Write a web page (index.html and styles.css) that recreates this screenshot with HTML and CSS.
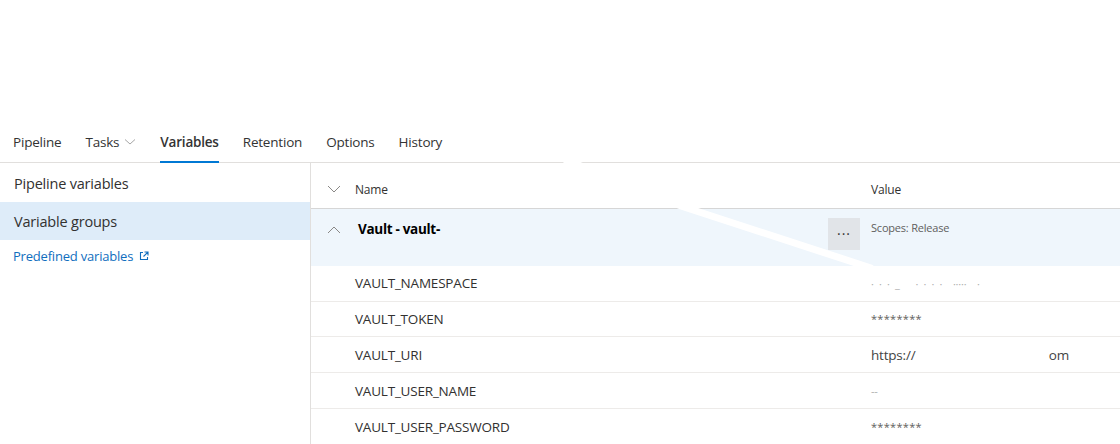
FILE: index.html
```html
<!DOCTYPE html>
<html>
<head>
<meta charset="utf-8">
<link rel="stylesheet" href="styles.css">
</head>
<body>
<div class="page">
  <div class="topspace"></div>
  <nav class="tabs">
    <div class="tab">Pipeline</div>
    <div class="tab">Tasks <svg class="chev" width="12" height="8" viewBox="0 0 12 8"><path d="M1 1.5 L6 6 L11 1.5" fill="none" stroke="#a6a6a6" stroke-width="1"/></svg></div>
    <div class="tab active">Variables</div>
    <div class="tab">Retention</div>
    <div class="tab">Options</div>
    <div class="tab">History</div>
  </nav>
  <div class="main">
    <aside class="side">
      <div class="side-item">Pipeline variables</div>
      <div class="side-item selected">Variable groups</div>
      <a class="side-link">Predefined variables <svg width="10" height="10" viewBox="0 0 10 10"><path d="M4 1.5 H1.5 V8.5 H8.5 V6" fill="none" stroke="#106ebe" stroke-width="1.1"/><path d="M5.5 1 H9 V4.5 M9 1 L4.5 5.5" fill="none" stroke="#106ebe" stroke-width="1.1"/></svg></a>
    </aside>
    <section class="grid">
      <div class="row head">
        <div class="c-icon"><svg width="14" height="8" viewBox="0 0 14 8"><path d="M1 1 L7 7 L13 1" fill="none" stroke="#8a8886" stroke-width="1"/></svg></div>
        <div class="c-name">Name</div>
        <div class="c-value">Value</div>
      </div>
      <div class="row group">
        <div class="c-icon"><svg width="14" height="8" viewBox="0 0 14 8"><path d="M1 7 L7 1 L13 7" fill="none" stroke="#8a8886" stroke-width="1"/></svg></div>
        <div class="c-name group-name"><span class="title">Vault - vault-</span><span class="more">···</span></div>
        <div class="c-value scopes">Scopes: Release</div>
      </div>
      <div class="row var">
        <div class="c-icon"></div>
        <div class="c-name">VAULT_NAMESPACE</div>
        <div class="c-value faint">·  ·  ·  _      ·  ·  ·  ·    ·····    ·</div>
      </div>
      <div class="row var">
        <div class="c-icon"></div>
        <div class="c-name">VAULT_TOKEN</div>
        <div class="c-value small">********</div>
      </div>
      <div class="row var">
        <div class="c-icon"></div>
        <div class="c-name">VAULT_URI</div>
        <div class="c-value url"><span>https://</span><span>om</span></div>
      </div>
      <div class="row var">
        <div class="c-icon"></div>
        <div class="c-name">VAULT_USER_NAME</div>
        <div class="c-value faint">--</div>
      </div>
      <div class="row var">
        <div class="c-icon"></div>
        <div class="c-name">VAULT_USER_PASSWORD</div>
        <div class="c-value small">********</div>
      </div>
      <svg class="scribble" width="420" height="120" viewBox="0 0 420 120"><path d="M5 2 L120 48 L310 110" fill="none" stroke="#ffffff" stroke-width="7" stroke-linecap="round"/></svg>
    </section>
  </div>
</div>
</body>
</html>
```
FILE: styles.css
```css
html, body {
  margin: 0;
  padding: 0;
  background: #ffffff;
}
body {
  font-family: "Open Sans", "Noto Sans", sans-serif;
  color: #323130;
  width: 1120px;
  height: 444px;
  overflow: hidden;
}
.topspace {
  height: 124px;
}
.tabs {
  display: flex;
  align-items: stretch;
  height: 38px;
  padding-left: 13px;
  gap: 24px;
  border-bottom: 1px solid #e1dfdd;
  font-size: 13.5px;
  letter-spacing: -0.2px;
}
.tab {
  display: flex;
  align-items: center;
  gap: 5px;
  padding-bottom: 2px;
  border-bottom: 2px solid transparent;
  margin-bottom: -1px;
  color: #333333;
}
.tab.active {
  font-weight: 600;
  border-bottom-color: #0078d4;
}
.main {
  display: flex;
  height: 282px;
}
.side {
  width: 310px;
  border-right: 1px solid #e1dfdd;
  display: flex;
  flex-direction: column;
}
.side-item {
  height: 38px;
  display: flex;
  align-items: center;
  padding-left: 14px;
  font-size: 14.5px;
  letter-spacing: -0.2px;
}
.side-item:first-child {
  height: 39px;
  padding-top: 2px;
  box-sizing: border-box;
}
.side-item.selected {
  background: #deecf9;
}
.side-link {
  display: flex;
  align-items: center;
  gap: 6px;
  height: 32px;
  padding-left: 13px;
  font-size: 13px;
  letter-spacing: -0.2px;
  color: #106ebe;
}
.grid {
  flex: 1;
  position: relative;
  display: flex;
  flex-direction: column;
}
.row {
  display: flex;
}
.c-icon {
  width: 44px;
  display: flex;
  justify-content: center;
  padding-left: 1px;
  box-sizing: border-box;
}
.c-name {
  width: 516px;
  font-size: 13.5px;
  letter-spacing: -0.2px;
}
.c-value {
  flex: 1;
  font-size: 13.5px;
  letter-spacing: -0.2px;
}
.head {
  height: 46px;
  align-items: center;
  padding-top: 8px;
  box-sizing: border-box;
  border-bottom: 1px solid #d6d6d6;
}
.head .c-name, .head .c-value {
  font-size: 12px;
  color: #323130;
}
.group {
  height: 57px;
  background: #eff6fc;
  align-items: flex-start;
}
.group .c-icon {
  padding-top: 17px;
}
.group-name {
  display: flex;
  justify-content: space-between;
  padding-top: 11px;
  box-sizing: border-box;
}
.title {
  font-weight: 700;
  font-size: 13.5px;
  letter-spacing: -0.3px;
  color: #000000;
  padding-left: 3px;
}
.more {
  width: 32px;
  height: 32px;
  margin-top: -2px;
  margin-right: 11px;
  background: #e1e4e8;
  display: flex;
  align-items: center;
  justify-content: center;
  font-size: 14px;
  letter-spacing: 1px;
  color: #323130;
}
.scopes {
  font-size: 11px;
  color: #605e5c;
  padding-top: 11px;
}
.var {
  height: 36px;
  align-items: center;
  border-bottom: 1px solid #edebe9;
  box-sizing: border-box;
}
.small {
  font-size: 11px;
  color: #605e5c;
  letter-spacing: 0.3px;
}
.faint {
  font-size: 11px;
  color: #b0b0b0;
  white-space: pre;
}
.url {
  display: flex;
  width: 198px;
  flex: none;
  justify-content: space-between;
  font-size: 13.5px;
  color: #444444;
}
.scribble {
  position: absolute;
  left: 250px;
  top: -5px;
  pointer-events: none;
}
```
